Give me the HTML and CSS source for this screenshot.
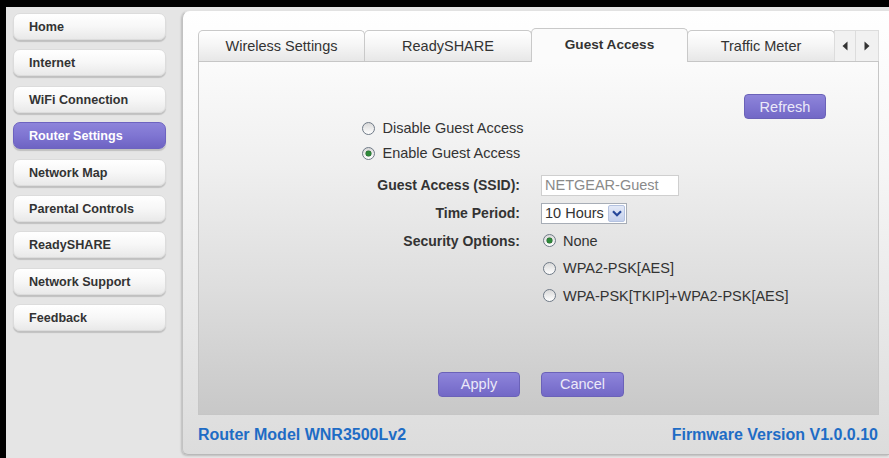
FILE: index.html
```html
<!DOCTYPE html>
<html lang="en">
<head>
<meta charset="utf-8">
<title>NETGEAR Router — Guest Access</title>
<link rel="stylesheet" href="styles.css">
</head>
<body>
<div class="frame">
  <nav class="sidebar">
    <a class="nav-btn">Home</a>
    <a class="nav-btn">Internet</a>
    <a class="nav-btn">WiFi Connection</a>
    <a class="nav-btn active">Router Settings</a>
    <a class="nav-btn">Network Map</a>
    <a class="nav-btn">Parental Controls</a>
    <a class="nav-btn">ReadySHARE</a>
    <a class="nav-btn">Network Support</a>
    <a class="nav-btn">Feedback</a>
  </nav>

  <main class="panel">
    <div class="tabs">
      <div class="tab tab-wireless">Wireless Settings</div>
      <div class="tab tab-ready">ReadySHARE</div>
      <div class="tab tab-guest active">Guest Access</div>
      <div class="tab tab-traffic">Traffic Meter</div>
      <div class="tab-arrow">
        <svg width="6" height="10" viewBox="0 0 6 10"><path d="M5.5 0.5 L0.5 5 L5.5 9.5 Z" fill="#333"/></svg>
      </div>
      <div class="tab-arrow">
        <svg width="6" height="10" viewBox="0 0 6 10"><path d="M0.5 0.5 L5.5 5 L0.5 9.5 Z" fill="#333"/></svg>
      </div>
    </div>

    <section class="tab-body">
      <div class="refresh-row">
        <button class="btn">Refresh</button>
      </div>

      <div class="modes">
        <div class="radio-row"><span class="radio"></span>Disable Guest Access</div>
        <div class="radio-row"><span class="radio checked"></span>Enable Guest Access</div>
      </div>

      <div class="fields">
        <div class="label">Guest Access (SSID):</div>
        <div class="value"><input class="text-input" type="text" value="NETGEAR-Guest"></div>

        <div class="label">Time Period:</div>
        <div class="value">
          <div class="select">
            <span class="select-text">10 Hours</span>
            <span class="select-btn">
              <svg width="10" height="7" viewBox="0 0 10 7"><path d="M1 1.2 L5 5.2 L9 1.2" fill="none" stroke="#25479a" stroke-width="2.2"/></svg>
            </span>
          </div>
        </div>

        <div class="label">Security Options:</div>
        <div class="value"><div class="radio-row"><span class="radio checked"></span>None</div></div>

        <div class="label"></div>
        <div class="value"><div class="radio-row"><span class="radio"></span>WPA2-PSK[AES]</div></div>

        <div class="label"></div>
        <div class="value"><div class="radio-row"><span class="radio"></span>WPA-PSK[TKIP]+WPA2-PSK[AES]</div></div>
      </div>

      <div class="actions">
        <button class="btn btn-apply">Apply</button>
        <button class="btn btn-cancel">Cancel</button>
      </div>
    </section>

    <footer class="panel-foot">
      <span>Router Model WNR3500Lv2</span>
      <span>Firmware Version V1.0.0.10</span>
    </footer>
  </main>
</div>
</body>
</html>
```

FILE: styles.css
```css
* {
  box-sizing: border-box;
}

html, body {
  margin: 0;
  padding: 0;
  background: #ffffff;
}

body {
  font-family: "Liberation Sans", Arial, sans-serif;
  color: #333;
}

/* window chrome: dark edge along the top and left */
.frame {
  display: flex;
  width: 889px;
  height: 458px;
  overflow: hidden;
  border-top: 7px solid #000;
  border-left: 6px solid #000;
  background: #e5e5e5;
}

/* ---------- left navigation ---------- */
.sidebar {
  flex: 0 0 176px;
  display: flex;
  flex-direction: column;
  gap: 9.4px;
  padding: 6px 0 0 7px;
}

.nav-btn {
  display: flex;
  align-items: center;
  width: 153px;
  height: 27px;
  padding: 1px 0 0 15px;
  border: 1px solid #dcdcdc;
  border-radius: 7px;
  background: linear-gradient(#ffffff 0%, #f7f7f7 50%, #e9e9e9 100%);
  box-shadow: 0 2px 1px rgba(0, 0, 0, 0.16);
  font-size: 12.6px;
  font-weight: bold;
  color: #333;
  cursor: pointer;
}

.nav-btn.active {
  border-color: #6d63c0;
  background: linear-gradient(#8d84da 0%, #7f75d2 50%, #6e63c3 100%);
  color: #fff;
}

/* ---------- main panel ---------- */
.panel {
  flex: 0 0 707px;
  width: 707px;
  display: flex;
  flex-direction: column;
  height: 445px;
  margin-top: 3px;
  padding: 17px 10px 0 15px;
  border-left: 1px solid #c2c2c2;
  border-top: 1px solid #e2e2e2;
  border-bottom: 1px solid #b9b9b9;
  border-top-left-radius: 8px;
  border-bottom-left-radius: 6px;
  background: linear-gradient(#ffffff 0%, #f6f6f6 35%, #dcdcdc 100%);
  box-shadow: -1px 1px 2px rgba(0, 0, 0, 0.18);
}

/* tab strip */
.tabs {
  display: flex;
  align-items: flex-end;
  height: 33px;
  width: 681px;
}

.tab {
  display: flex;
  align-items: center;
  justify-content: center;
  height: 31px;
  margin-right: -1px;
  border: 1px solid #c9c9c9;
  border-bottom: none;
  border-radius: 5px 5px 0 0;
  background: linear-gradient(#ffffff 0%, #f6f6f6 45%, #e7e7e7 100%);
  font-size: 14.5px;
  color: #333;
}

.tab-wireless { width: 167px; }
.tab-ready    { width: 168px; }
.tab-guest    { width: 157px; }
.tab-traffic  { width: 148px; }

.tab.active {
  position: relative;
  z-index: 1;
  height: 34px;
  margin-bottom: -1px;
  padding-bottom: 2px;
  background: #fbfbfb;
  font-size: 13.6px;
  font-weight: bold;
}

.tab-arrow {
  display: flex;
  align-items: center;
  justify-content: center;
  width: 22px;
  height: 31px;
  border: 1px solid #dcdcdc;
  border-bottom: none;
  background: #f1f1f1;
}

.tab-arrow + .tab-arrow {
  border-left: none;
  width: 23px;
}

/* tab content */
.tab-body {
  width: 681px;
  height: 355px;
  border: 1px solid #c6c6c6;
  background: linear-gradient(#fbfbfb 0%, #efefef 30%, #dddddd 65%, #c8c8c8 100%);
  font-size: 14.5px;
  color: #333;
}

.refresh-row {
  display: flex;
  justify-content: flex-end;
  padding: 32px 52px 0 0;
  margin-bottom: -3.5px;
}

.btn {
  height: 25px;
  padding: 0;
  border: 1px solid #6b62b8;
  border-radius: 4px;
  background: linear-gradient(#8e85da 0%, #8076d1 50%, #7268c6 100%);
  font-family: "Liberation Sans", Arial, sans-serif;
  font-size: 14.5px;
  color: #ebe9f8;
  cursor: pointer;
}

.refresh-row .btn {
  width: 82px;
}

.modes {
  padding-left: 163px;
}

.modes .radio-row {
  height: 25px;
}

.radio-row {
  display: flex;
  align-items: center;
  white-space: nowrap;
}

.radio {
  flex: 0 0 13px;
  width: 13px;
  height: 13px;
  margin-right: 7.5px;
  border: 1px solid #6f7a87;
  border-radius: 50%;
  background: linear-gradient(#d9d9d9, #ffffff);
  position: relative;
}

.radio.checked::after {
  content: "";
  position: absolute;
  left: 3px;
  top: 3px;
  width: 5px;
  height: 5px;
  border-radius: 50%;
  background: #2f8a3a;
  box-shadow: 0 0 0 0.5px #1d5e26;
}

.fields {
  display: grid;
  grid-template-columns: 321px 1fr;
  grid-auto-rows: 27.6px;
  column-gap: 21px;
  margin-top: 6.2px;
}

.label {
  display: flex;
  align-items: center;
  justify-content: flex-end;
  font-size: 14px;
  font-weight: bold;
  color: #333;
}

.value {
  display: flex;
  align-items: center;
}

.value .radio-row {
  margin-left: 1.5px;
}

.text-input {
  width: 138px;
  height: 21px;
  padding: 0 0 0 3px;
  border: 1px solid #cfcfcf;
  background: #fff;
  font-family: "Liberation Sans", Arial, sans-serif;
  font-size: 14.5px;
  color: #8a8a8a;
  outline: none;
}

.select {
  display: flex;
  align-items: center;
  justify-content: space-between;
  width: 86px;
  height: 21px;
  padding: 1px 1px 1px 3px;
  border: 1px solid #a7adb6;
  background: #fff;
}

.select-text {
  font-size: 14.5px;
  color: #333;
}

.select-btn {
  display: flex;
  align-items: center;
  justify-content: center;
  width: 17px;
  height: 17px;
  border: 1px solid #b4c2e0;
  border-radius: 2px;
  background: linear-gradient(#e3e9f7, #c4d0ec);
}

.actions {
  display: grid;
  grid-template-columns: 321px 1fr;
  column-gap: 21px;
  margin-top: 62.3px;
}

.btn-apply {
  justify-self: end;
  width: 82px;
}

.btn-cancel {
  justify-self: start;
  width: 83px;
}

/* footer line under the tab content */
.panel-foot {
  display: flex;
  align-items: center;
  justify-content: space-between;
  width: 681px;
  height: 39px;
  padding: 0 1px 0 0;
  font-size: 16px;
  font-weight: bold;
  color: #1e6cc5;
}
```
